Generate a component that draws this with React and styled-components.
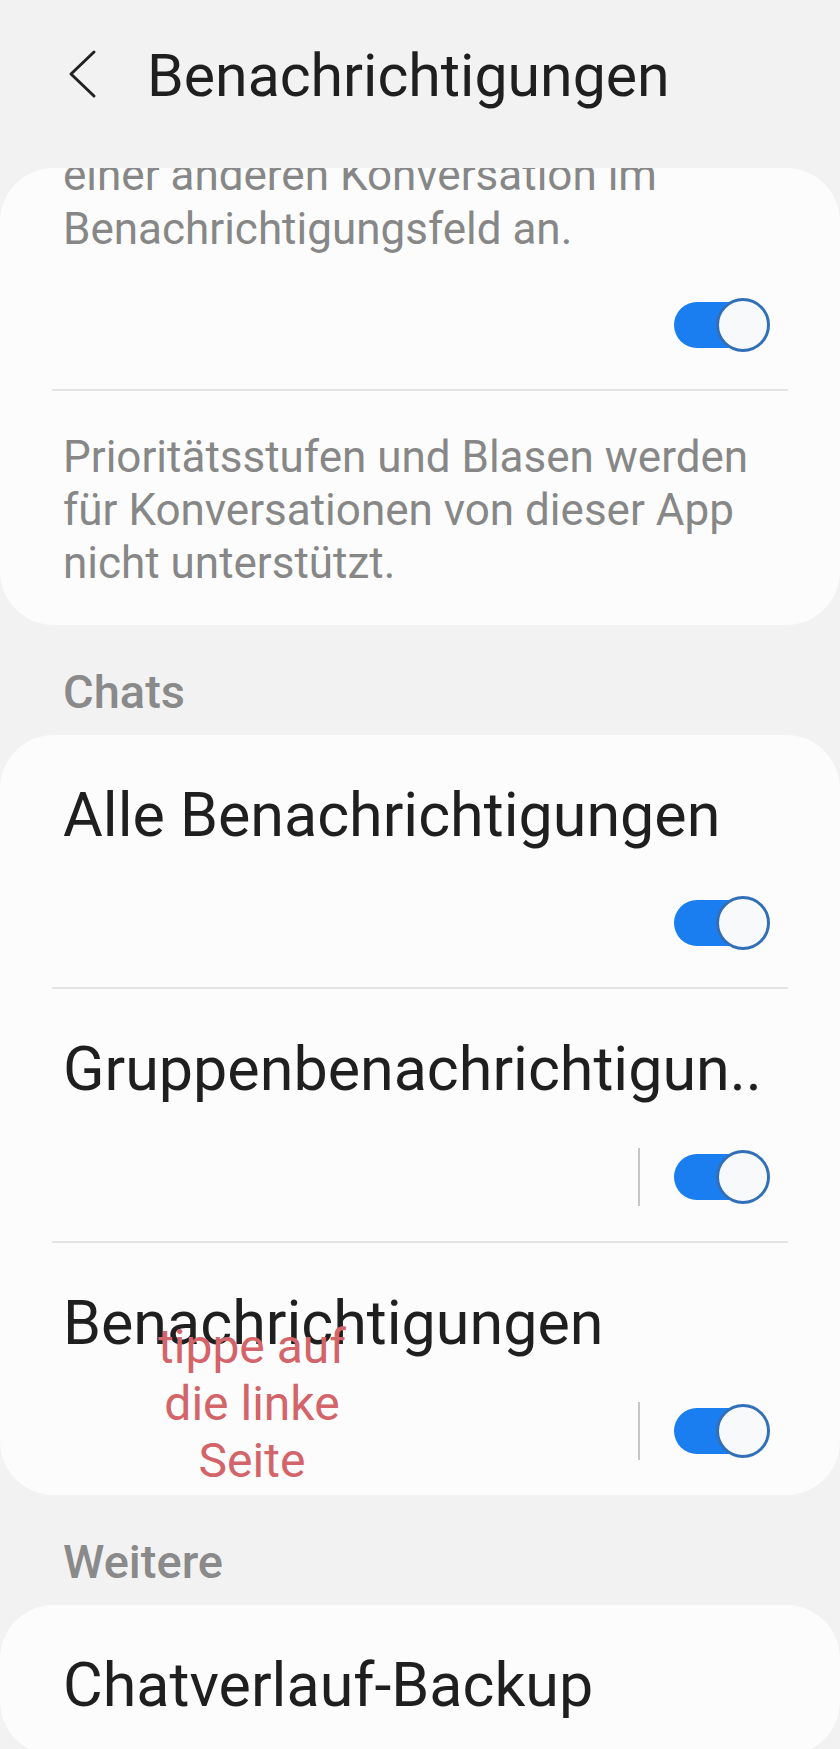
import React from "react";
import styled, { createGlobalStyle } from "styled-components";

const GlobalStyle = createGlobalStyle`
  html, body {
    margin: 0;
    padding: 0;
    background: #f2f2f2;
  }
  body {
    font-family: Roboto, "Noto Sans", sans-serif;
  }
`;

const Screen = styled.div`
  width: 840px;
  height: 1749px;
  overflow: hidden;
  background: #f2f2f2;
`;

const Header = styled.div`
  display: flex;
  align-items: center;
  height: 168px;
  padding: 0 0 16px 67px;
  box-sizing: border-box;
`;

const BackButton = styled.div`
  display: flex;
  width: 30px;
  height: 50px;
  margin-right: 50px;
  margin-bottom: 4px;
`;

const Title = styled.h1`
  margin: 0;
  font-size: 59px;
  line-height: 70px;
  font-weight: 400;
  color: #1f1f1f;
`;

const Card = styled.div`
  background: #fcfcfc;
  border-radius: 54px;
  overflow: hidden;
`;

const Block = styled.div`
  padding: ${(p) => p.$pad || "40px 70px 35px 63px"};
`;

const Note = styled.p`
  margin: ${(p) => (p.$clipped ? "-20px 0 0" : "0")};
  font-size: 44px;
  line-height: ${(p) => (p.$clipped ? "54px" : "53px")};
  color: #878787;
`;

const Divider = styled.div`
  height: 2px;
  margin: 0 52px;
  background: #e4e4e4;
`;

const Row = styled.div`
  position: relative;
  padding: 45px 70px 35px 63px;
`;

const RowTitle = styled.div`
  font-size: 61px;
  line-height: 70px;
  color: #1f1f1f;
  white-space: nowrap;
`;

const SwitchLine = styled.div`
  display: flex;
  align-items: center;
  justify-content: flex-end;
  height: 58px;
  margin-top: ${(p) => p.$gap || "44px"};
`;

const Separator = styled.div`
  width: 2px;
  height: 58px;
  background: #c6c6c6;
  margin-right: 34px;
`;

const Switch = styled.div`
  position: relative;
  width: 96px;
  height: 58px;
`;

const Track = styled.div`
  position: absolute;
  left: 0;
  top: 6px;
  width: 86px;
  height: 46px;
  border-radius: 23px;
  background: #1b7ef0;
`;

const Knob = styled.div`
  position: absolute;
  right: 0;
  top: 2px;
  width: 54px;
  height: 54px;
  box-sizing: border-box;
  border-radius: 50%;
  border: 3px solid #3170b8;
  background: #f8f9fb;
`;

const SectionLabel = styled.div`
  padding: 39px 63px 15px;
  font-size: 47px;
  line-height: 56px;
  font-weight: 500;
  color: #8a8a8a;
`;

const Hint = styled.div`
  position: absolute;
  left: 132px;
  top: 75px;
  width: 240px;
  text-align: center;
  font-size: 48px;
  line-height: 57px;
  color: #d3646a;
  pointer-events: none;
`;

const Toggle = ({ split }) => (
  <>
    {split && <Separator />}
    <Switch>
      <Track />
      <Knob />
    </Switch>
  </>
);

const SwitchRow = ({ title, split, children }) => (
  <Row>
    <RowTitle>{title}</RowTitle>
    <SwitchLine>
      <Toggle split={split} />
    </SwitchLine>
    {children}
  </Row>
);

export default function App() {
  return (
    <Screen>
      <GlobalStyle />
      <Header>
        <BackButton>
          <svg width="30" height="50" viewBox="0 0 30 50">
            <path
              d="M27 3 L4 25 L27 47"
              fill="none"
              stroke="#222"
              strokeWidth="3"
              strokeLinecap="round"
              strokeLinejoin="round"
            />
          </svg>
        </BackButton>
        <Title>Benachrichtigungen</Title>
      </Header>

      <Card>
        <Block $pad="0 70px 35px 63px">
          <Note $clipped>
            einer anderen Konversation im
            <br />
            Benachrichtigungsfeld an.
          </Note>
          <SwitchLine $gap="40px">
            <Toggle />
          </SwitchLine>
        </Block>
        <Divider />
        <Block>
          <Note>
            Prioritätsstufen und Blasen werden für Konversationen von dieser
            App nicht unterstützt.
          </Note>
        </Block>
      </Card>

      <SectionLabel>Chats</SectionLabel>
      <Card>
        <SwitchRow title="Alle Benachrichtigungen" />
        <Divider />
        <SwitchRow title="Gruppenbenachrichtigun.." split />
        <Divider />
        <SwitchRow title="Benachrichtigungen" split>
          <Hint>
            tippe auf
            <br />
            die linke
            <br />
            Seite
          </Hint>
        </SwitchRow>
      </Card>

      <SectionLabel>Weitere</SectionLabel>
      <Card>
        <Row>
          <RowTitle>Chatverlauf-Backup</RowTitle>
        </Row>
      </Card>
    </Screen>
  );
}
